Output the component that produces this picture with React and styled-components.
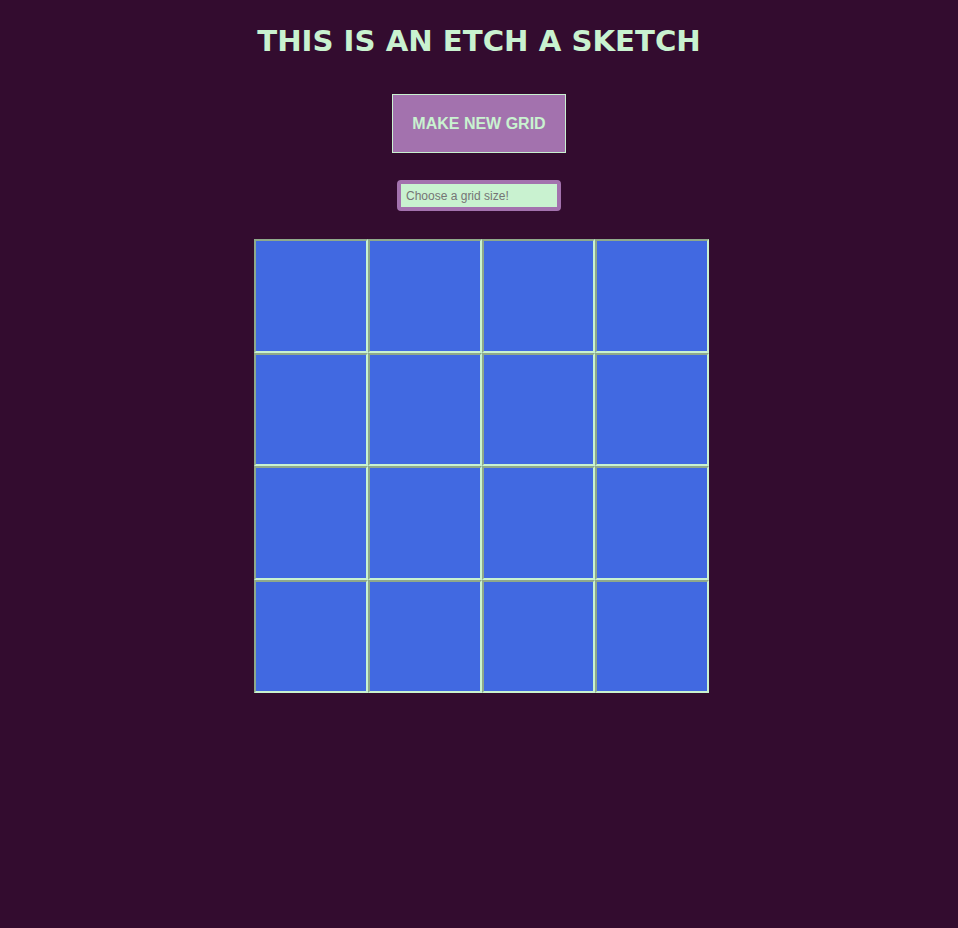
import React, { useState } from "react";
import styled, { createGlobalStyle } from "styled-components";

const GlobalStyle = createGlobalStyle`
  * {
    box-sizing: border-box;
  }
  body {
    margin: 0;
    background-color: #330c2f;
    font-family: "Liberation Sans", Arial, sans-serif;
  }
`;

const Page = styled.div`
  display: flex;
  flex-direction: column;
  align-items: center;
  min-height: 928px;
  padding-top: 22px;
`;

const Title = styled.h1`
  margin: 0;
  font-family: "DejaVu Sans", Verdana, sans-serif;
  font-size: 29.2px;
  font-weight: bold;
  line-height: 38px;
  color: #c9f2d0;
`;

const MakeButton = styled.button`
  margin-top: 34px;
  width: 174px;
  height: 59px;
  background-color: #a372ae;
  border: 1px solid #c9f2d0;
  color: #c9f2d0;
  font-family: "Liberation Sans", Arial, sans-serif;
  font-size: 16px;
  font-weight: bold;
  cursor: pointer;
`;

const SizeInput = styled.input`
  margin-top: 27px;
  width: 164px;
  height: 31px;
  padding: 0 5px;
  background-color: #c9f2d0;
  border: 4px solid #a372ae;
  border-radius: 4px;
  color: #333;
  font-family: "Liberation Sans", Arial, sans-serif;
  font-size: 12px;
  outline: none;

  &::placeholder {
    color: #757575;
  }
`;

const Grid = styled.div`
  margin-top: 28px;
  margin-left: 5px;
  width: 455px;
  height: 454px;
  display: grid;
  grid-template-columns: repeat(${(props) => props.size}, 1fr);
  grid-template-rows: repeat(${(props) => props.size}, 1fr);
`;

const Cell = styled.div`
  background-color: #4169e1;
  border: 2px solid #c9f2d0;
  border-top-color: #8fa98b;
  border-left-color: #8fa98b;
`;

export default function App() {
  const [size] = useState(4);
  const cells = Array.from({ length: size * size });

  return (
    <Page>
      <GlobalStyle />
      <Title>THIS IS AN ETCH A SKETCH</Title>
      <MakeButton>MAKE NEW GRID</MakeButton>
      <SizeInput type="text" placeholder="Choose a grid size!" />
      <Grid size={size}>
        {cells.map((_, i) => (
          <Cell key={i} />
        ))}
      </Grid>
    </Page>
  );
}
